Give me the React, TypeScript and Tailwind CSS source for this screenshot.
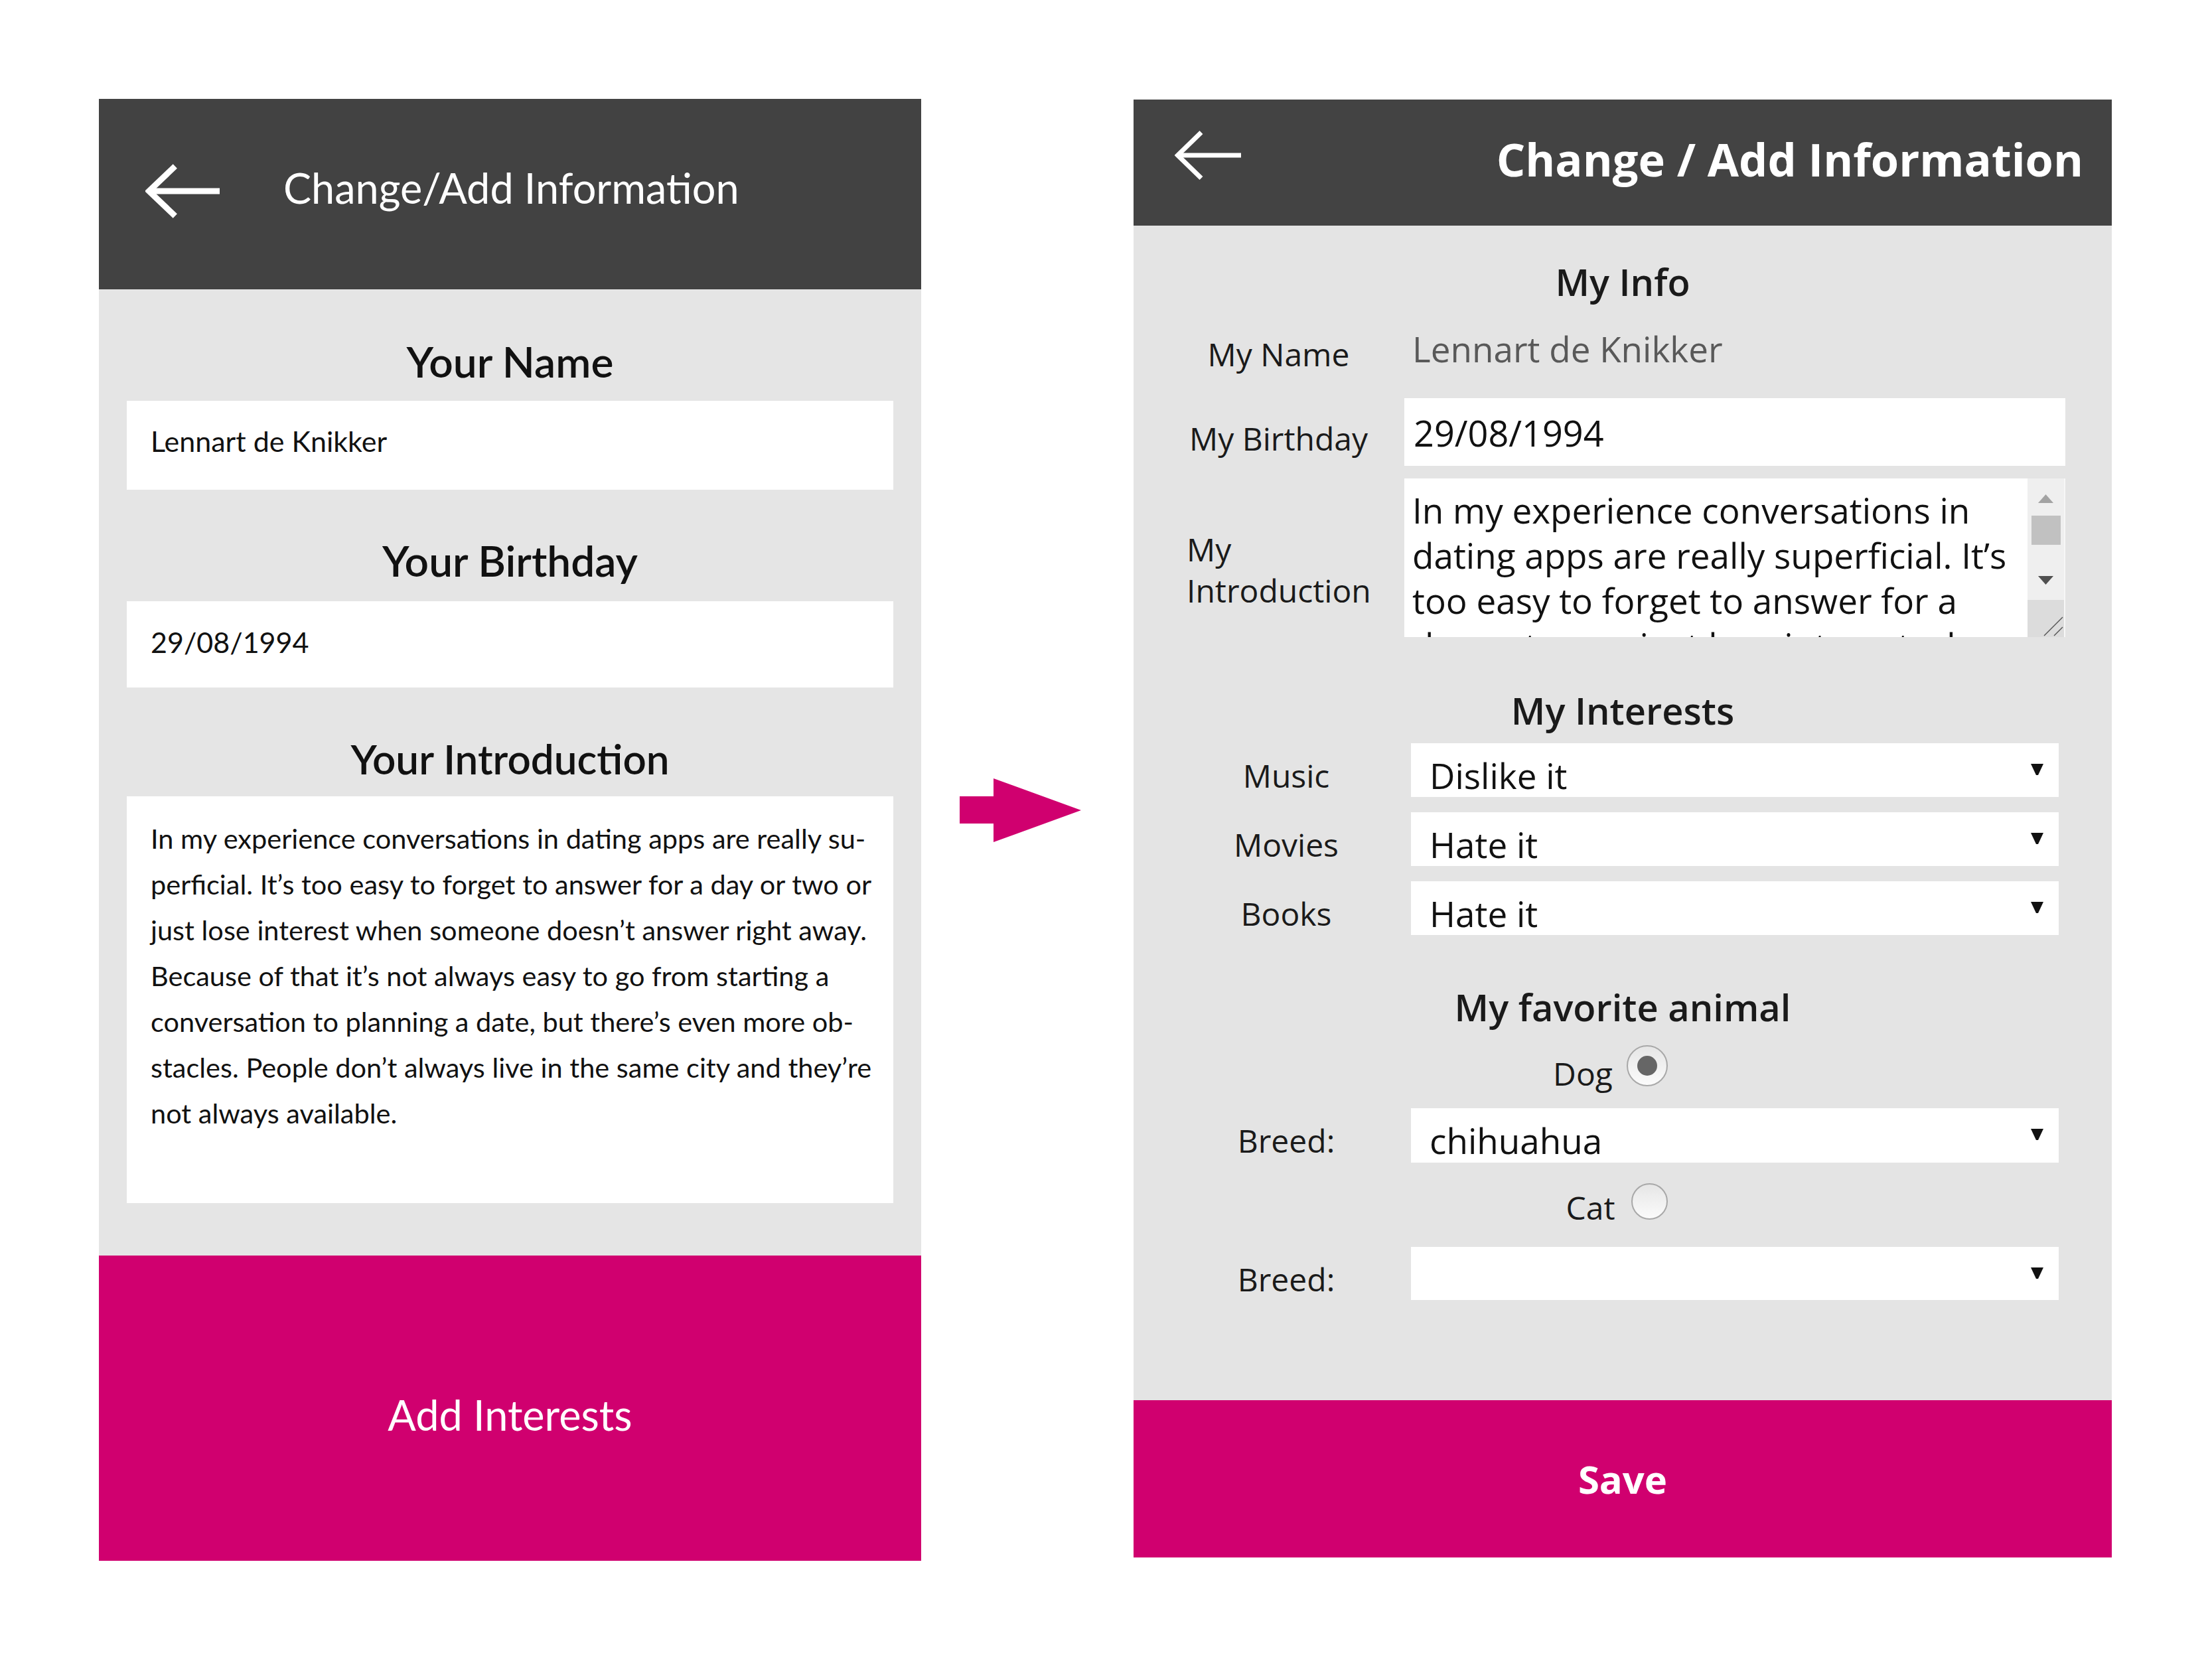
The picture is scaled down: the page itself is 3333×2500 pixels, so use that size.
import React from "react";

function BackArrow({ w, h, stroke }: { w: number; h: number; stroke: number }) {
  const mid = h / 2;
  const head = w * 0.4;
  return (
    <svg width={w} height={h} viewBox={`0 0 ${w} ${h}`} className="shrink-0">
      <polyline
        points={`${head},${stroke / 2} ${stroke / 2 + 1},${mid} ${head},${h - stroke / 2}`}
        fill="none"
        stroke="white"
        strokeWidth={stroke}
      />
      <line x1={stroke / 2 + 2} y1={mid} x2={w} y2={mid} stroke="white" strokeWidth={stroke} />
    </svg>
  );
}

function LeftPanel() {
  const lines = [
    "In my experience conversations in dating apps are really su-",
    "perficial. It’s too easy to forget to answer for a day or two or",
    "just lose interest when someone doesn’t answer right away.",
    "Because of that it’s not always easy to go from starting a",
    "conversation to planning a date, but there’s even more ob-",
    "stacles. People don’t always live in the same city and they’re",
    "not always available.",
  ];
  return (
    <div className="w-[1239px] shrink-0 flex flex-col font-['Lato',sans-serif] text-[#111]">
      <div className="h-[287px] bg-[#424242] flex items-center pl-[70px] pb-[20px]">
        <div className="mt-[10px]">
          <BackArrow w={112} h={84} stroke={9} />
        </div>
        <span className="ml-[96px] text-[63px] leading-none text-white">Change/Add Information</span>
      </div>

      <div className="h-[1456px] bg-[#e5e5e5] px-[42px] flex flex-col">
        <h2 className="mt-[77px] text-[64px] leading-none font-semibold text-center">Your Name</h2>
        <div className="mt-[27px] h-[134px] bg-white flex items-center pl-[36px] pb-[12px] text-[43px]">
          Lennart de Knikker
        </div>

        <h2 className="mt-[75px] text-[64px] leading-none font-semibold text-center">Your Birthday</h2>
        <div className="mt-[29px] h-[130px] bg-white flex items-center pl-[36px] pb-[6px] text-[43px]">
          29/08/1994
        </div>

        <h2 className="mt-[76px] text-[62px] leading-none font-semibold text-center">Your Introduction</h2>
        <div className="mt-[26px] h-[613px] bg-white pl-[36px] pt-[29px] text-[41.5px] leading-[69px]">
          {lines.map((l) => (
            <div key={l} className="whitespace-nowrap">
              {l}
            </div>
          ))}
        </div>
      </div>

      <div className="h-[460px] bg-[#d0006f] flex items-center justify-center pt-[18px] text-[63px] leading-none text-white">
        Add Interests
      </div>
    </div>
  );
}

function Caret() {
  return (
    <svg width="19" height="17" viewBox="0 0 19 17" className="shrink-0">
      <polygon points="0,0 19,0 11,17 8,17" fill="#111" />
    </svg>
  );
}

function Select({ value, h = 81 }: { value: string; h?: number }) {
  return (
    <div
      className="w-[976px] bg-white flex items-start justify-between pl-[28px] pr-[23px]"
      style={{ height: h }}
    >
      <span className="mt-[22px] text-[53px] leading-none text-[#111]">{value}</span>
      <span className="mt-[31px]">
        <Caret />
      </span>
    </div>
  );
}

function SelectRow({ label, value, mt, h }: { label: string; value: string; mt: string; h?: number }) {
  return (
    <div className={`flex items-start ${mt}`}>
      <div className="ml-[80px] w-[300px] mt-[25px] text-center text-[48px] leading-none">{label}</div>
      <div className="ml-[38px]">
        <Select value={value} h={h} />
      </div>
    </div>
  );
}

function Radio({ checked, size }: { checked?: boolean; size: number }) {
  return (
    <div
      className="rounded-full border-2 border-[#a8a8a8] bg-gradient-to-b from-[#e6e6e6] to-[#fbfbfb] flex items-center justify-center shrink-0"
      style={{ width: size, height: size }}
    >
      {checked && <div className="w-[30px] h-[30px] rounded-full bg-[#666]" />}
    </div>
  );
}

function RightPanel() {
  const intro = [
    "In my experience conversations in",
    "dating apps are really superficial. It’s",
    "too easy to forget to answer for a",
    "day or two or just lose interest when",
  ];
  return (
    <div className="w-[1474px] shrink-0 mt-[1px] flex flex-col font-['Open_Sans',sans-serif] text-[#1a1a1a]">
      <div className="h-[190px] bg-[#434343] flex items-center justify-between pl-[62px] pr-[43px] pb-[10px]">
        <div className="mb-[13px]">
          <BackArrow w={100} h={76} stroke={7} />
        </div>
        <span className="text-[68.5px] leading-none font-bold text-white">Change / Add Information</span>
      </div>

      <div className="h-[1770px] bg-[#e4e4e4] flex flex-col">
        <h2 className="mt-[56px] text-[56px] leading-none font-semibold text-center">My Info</h2>

        {/* name */}
        <div className="mt-[49px] h-[99px] flex items-start">
          <div className="ml-[80px] w-[277px] mt-[9px] text-center text-[48px] leading-none">My Name</div>
          <div className="ml-[63px] -mt-[2px] text-[53px] leading-none font-medium text-[#595959]">
            Lennart de Knikker
          </div>
        </div>

        {/* birthday */}
        <div className="h-[102px] flex items-start">
          <div className="ml-[80px] w-[277px] mt-[37px] text-center text-[48px] leading-none whitespace-nowrap">
            My Birthday
          </div>
          <div className="ml-[51px] w-[996px] h-[102px] bg-white pl-[14px] pt-[25px] text-[54px] leading-none text-[#111]">
            29/08/1994
          </div>
        </div>

        {/* introduction */}
        <div className="mt-[19px] h-[239px] flex items-start">
          <div className="ml-[80px] w-[277px] mt-[76px] text-[48px] leading-[62px]">
            My
            <br />
            Introduction
          </div>
          <div className="ml-[51px] w-[996px] h-[239px] bg-white flex">
            <div className="flex-1 overflow-hidden pl-[12px] pt-[14px] text-[53px] leading-[68px] text-[#111]">
              {intro.map((l) => (
                <div key={l} className="whitespace-nowrap">
                  {l}
                </div>
              ))}
            </div>
            <div className="w-[55px] h-full bg-[#efefef] flex flex-col items-center">
              <svg width="23" height="13" viewBox="0 0 23 13" className="mt-[24px]">
                <polygon points="11.5,0 23,13 0,13" fill="#a3a3a3" />
              </svg>
              <div className="mt-[19px] w-[44px] h-[44px] bg-[#c1c1c1]" />
              <svg width="23" height="13" viewBox="0 0 23 13" className="mt-[47px]">
                <polygon points="0,0 23,0 11.5,13" fill="#505050" />
              </svg>
              <div className="mt-[23px] w-full flex-1 bg-[#dcdcdc]">
                <svg width="55" height="55" viewBox="0 0 55 55">
                  <line x1="25" y1="54" x2="53" y2="26" stroke="#555" strokeWidth="1.5" />
                  <line x1="40" y1="54" x2="53" y2="41" stroke="#555" strokeWidth="1.5" />
                </svg>
              </div>
            </div>
            <div className="w-[2px] h-full bg-[#f7f7f7]" />
          </div>
        </div>

        <h2 className="mt-[82px] text-[56px] leading-none font-semibold text-center">My Interests</h2>

        <SelectRow label="Music" value="Dislike it" mt="mt-[22px]" />
        <SelectRow label="Movies" value="Hate it" mt="mt-[23px]" />
        <SelectRow label="Books" value="Hate it" mt="mt-[23px]" />

        <h2 className="mt-[80px] text-[56px] leading-none font-semibold text-center">My favorite animal</h2>

        <div className="mt-[30px] flex justify-center items-start gap-[21px] pr-[37px]">
          <span className="mt-[19px] text-[48px] leading-none">Dog</span>
          <Radio checked size={62} />
        </div>

        <SelectRow label="Breed:" value="chihuahua" mt="mt-[28px]" h={82} />

        <div className="mt-[31px] flex justify-center items-start gap-[24px] pr-[18px]">
          <span className="mt-[13px] text-[48px] leading-none">Cat</span>
          <Radio size={55} />
        </div>

        <SelectRow label="Breed:" value="" mt="mt-[35px]" h={80} />
      </div>

      <div className="h-[237px] bg-[#d0006f] flex items-center justify-center text-[58px] leading-none font-bold text-white">
        Save
      </div>
    </div>
  );
}

export default function App() {
  return (
    <div className="w-[3333px] h-[2500px] bg-white flex items-start pt-[149px] pl-[149px]">
      <LeftPanel />
      <svg width="183" height="96" viewBox="0 0 183 96" className="shrink-0 ml-[58px] mt-[1024px]">
        <polygon points="0,27 51,27 51,0 183,48 51,96 51,68 0,68" fill="#d0006f" />
      </svg>
      <div className="ml-[79px]">
        <RightPanel />
      </div>
    </div>
  );
}
